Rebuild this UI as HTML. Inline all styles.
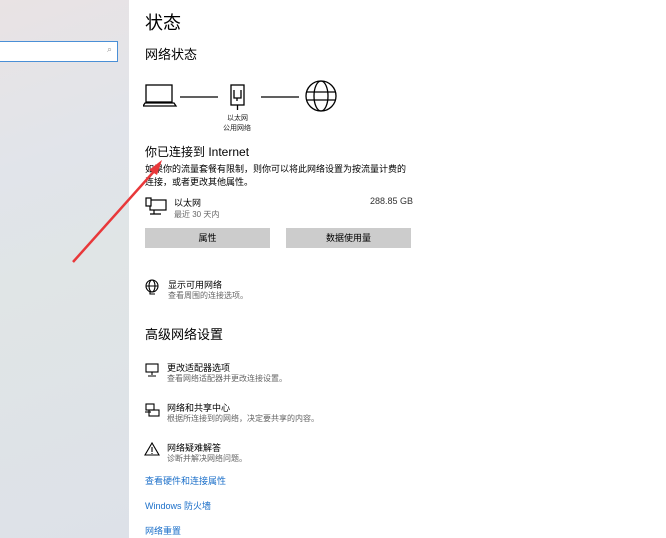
<!DOCTYPE html>
<html><head><meta charset="utf-8"><style>
body{margin:0;width:666px;height:538px;overflow:hidden;background:#fff;font-family:"Liberation Sans","Noto Sans CJK SC",sans-serif;position:relative;color:#000}
.l{position:absolute;left:0;top:0;width:129px;height:538px;background:linear-gradient(160deg,#e9e3e4 0%,#e1e4ea 30%,#e0e5e6 50%,#dde1e8 100%)}
.s{position:absolute;left:-2px;top:41px;width:118px;height:19px;border:1px solid #4a8fd6;background:#fff}
.a{position:absolute;white-space:nowrap}
.t{font-size:9px;color:#000}
.g{font-size:8px;color:#666}
.btn{position:absolute;background:#ccc;font-size:9px;text-align:center;line-height:20px;height:20px;top:228px}
.lnk{font-size:9px;color:#1b6fc9}
</style></head><body>
<div class="l"><div class="s"><span style="position:absolute;right:5px;top:2px;font-size:9px;color:#999">⌕</span></div></div>
<div class="a" style="left:145px;top:9px;font-size:18px">状态</div>
<div class="a" style="left:145px;top:44px;font-size:13px">网络状态</div>
<svg class="a" style="left:143px;top:80px" width="200" height="36" fill="none" stroke="#000" stroke-width="1.3">
<rect x="3" y="5" width="26" height="17"/><path d="M0 26h33l-2-3H2z"/>
<path d="M37 17h38M118 17h38"/>
<rect x="88" y="5" width="13" height="20"/><path d="M91 10v8h7v-8M94 18v3M94.5 25v5"/>
<circle cx="178" cy="16" r="15"/><ellipse cx="178" cy="16" rx="7" ry="15"/><path d="M163 12h30M163 20h30"/>
</svg>
<div class="a g" style="left:227px;top:113px;color:#222;font-size:7px">以太网</div>
<div class="a g" style="left:223px;top:123px;color:#222;font-size:7px">公用网络</div>
<div class="a" style="left:145px;top:143px;font-size:12px">你已连接到 Internet</div>
<div class="a t" style="left:145px;top:162px">如果你的流量套餐有限制，则你可以将此网络设置为按流量计费的</div>
<div class="a t" style="left:145px;top:175px">连接，或者更改其他属性。</div>
<svg class="a" style="left:145px;top:197px" width="24" height="20" fill="none" stroke="#000" stroke-width="1.2"><rect x="5" y="3" width="16" height="10"/><path d="M9 13v4M5 17h11"/><rect x="1" y="1" width="5" height="8" fill="#fff"/></svg>
<div class="a t" style="left:174px;top:196px">以太网</div>
<div class="a g" style="left:174px;top:209px">最近 30 天内</div>
<div class="a t" style="left:370px;top:196px;color:#333">288.85 GB</div>
<div class="btn" style="left:145px;width:125px">属性</div>
<div class="btn" style="left:286px;width:125px">数据使用量</div>
<svg class="a" style="left:144px;top:279px" width="16" height="16" fill="none" stroke="#000" stroke-width="1.1"><circle cx="8" cy="7" r="6"/><ellipse cx="8" cy="7" rx="3" ry="6"/><path d="M2 7h12M6 13v2h5"/></svg>
<div class="a t" style="left:168px;top:278px">显示可用网络</div>
<div class="a g" style="left:168px;top:290px">查看周围的连接选项。</div>
<div class="a" style="left:145px;top:324px;font-size:13px">高级网络设置</div>
<svg class="a" style="left:144px;top:362px" width="16" height="16" fill="none" stroke="#000" stroke-width="1.1"><rect x="2" y="2" width="12" height="8"/><path d="M8 10v3M4 14h8"/></svg>
<div class="a t" style="left:167px;top:361px">更改适配器选项</div>
<div class="a g" style="left:167px;top:373px">查看网络适配器并更改连接设置。</div>
<svg class="a" style="left:144px;top:402px" width="16" height="16" fill="none" stroke="#000" stroke-width="1.1"><rect x="2" y="2" width="8" height="6"/><rect x="5" y="8" width="10" height="6"/><path d="M1 10h6"/></svg>
<div class="a t" style="left:167px;top:401px">网络和共享中心</div>
<div class="a g" style="left:167px;top:413px">根据所连接到的网络，决定要共享的内容。</div>
<svg class="a" style="left:144px;top:441px" width="16" height="16" fill="none" stroke="#000" stroke-width="1.1"><path d="M8 2L1 14h14z"/><path d="M8 6v5M8 12v1"/></svg>
<div class="a t" style="left:167px;top:441px">网络疑难解答</div>
<div class="a g" style="left:167px;top:453px">诊断并解决网络问题。</div>
<div class="a lnk" style="left:145px;top:474px">查看硬件和连接属性</div>
<div class="a lnk" style="left:145px;top:499px">Windows 防火墙</div>
<div class="a lnk" style="left:145px;top:524px">网络重置</div>
<svg class="a" style="left:0;top:0" width="666" height="538"><path d="M73 262L157 168" stroke="#e8383a" stroke-width="2.5"/><path d="M162 160L149 170L157 175z" fill="#e8383a"/></svg>
</body></html>
